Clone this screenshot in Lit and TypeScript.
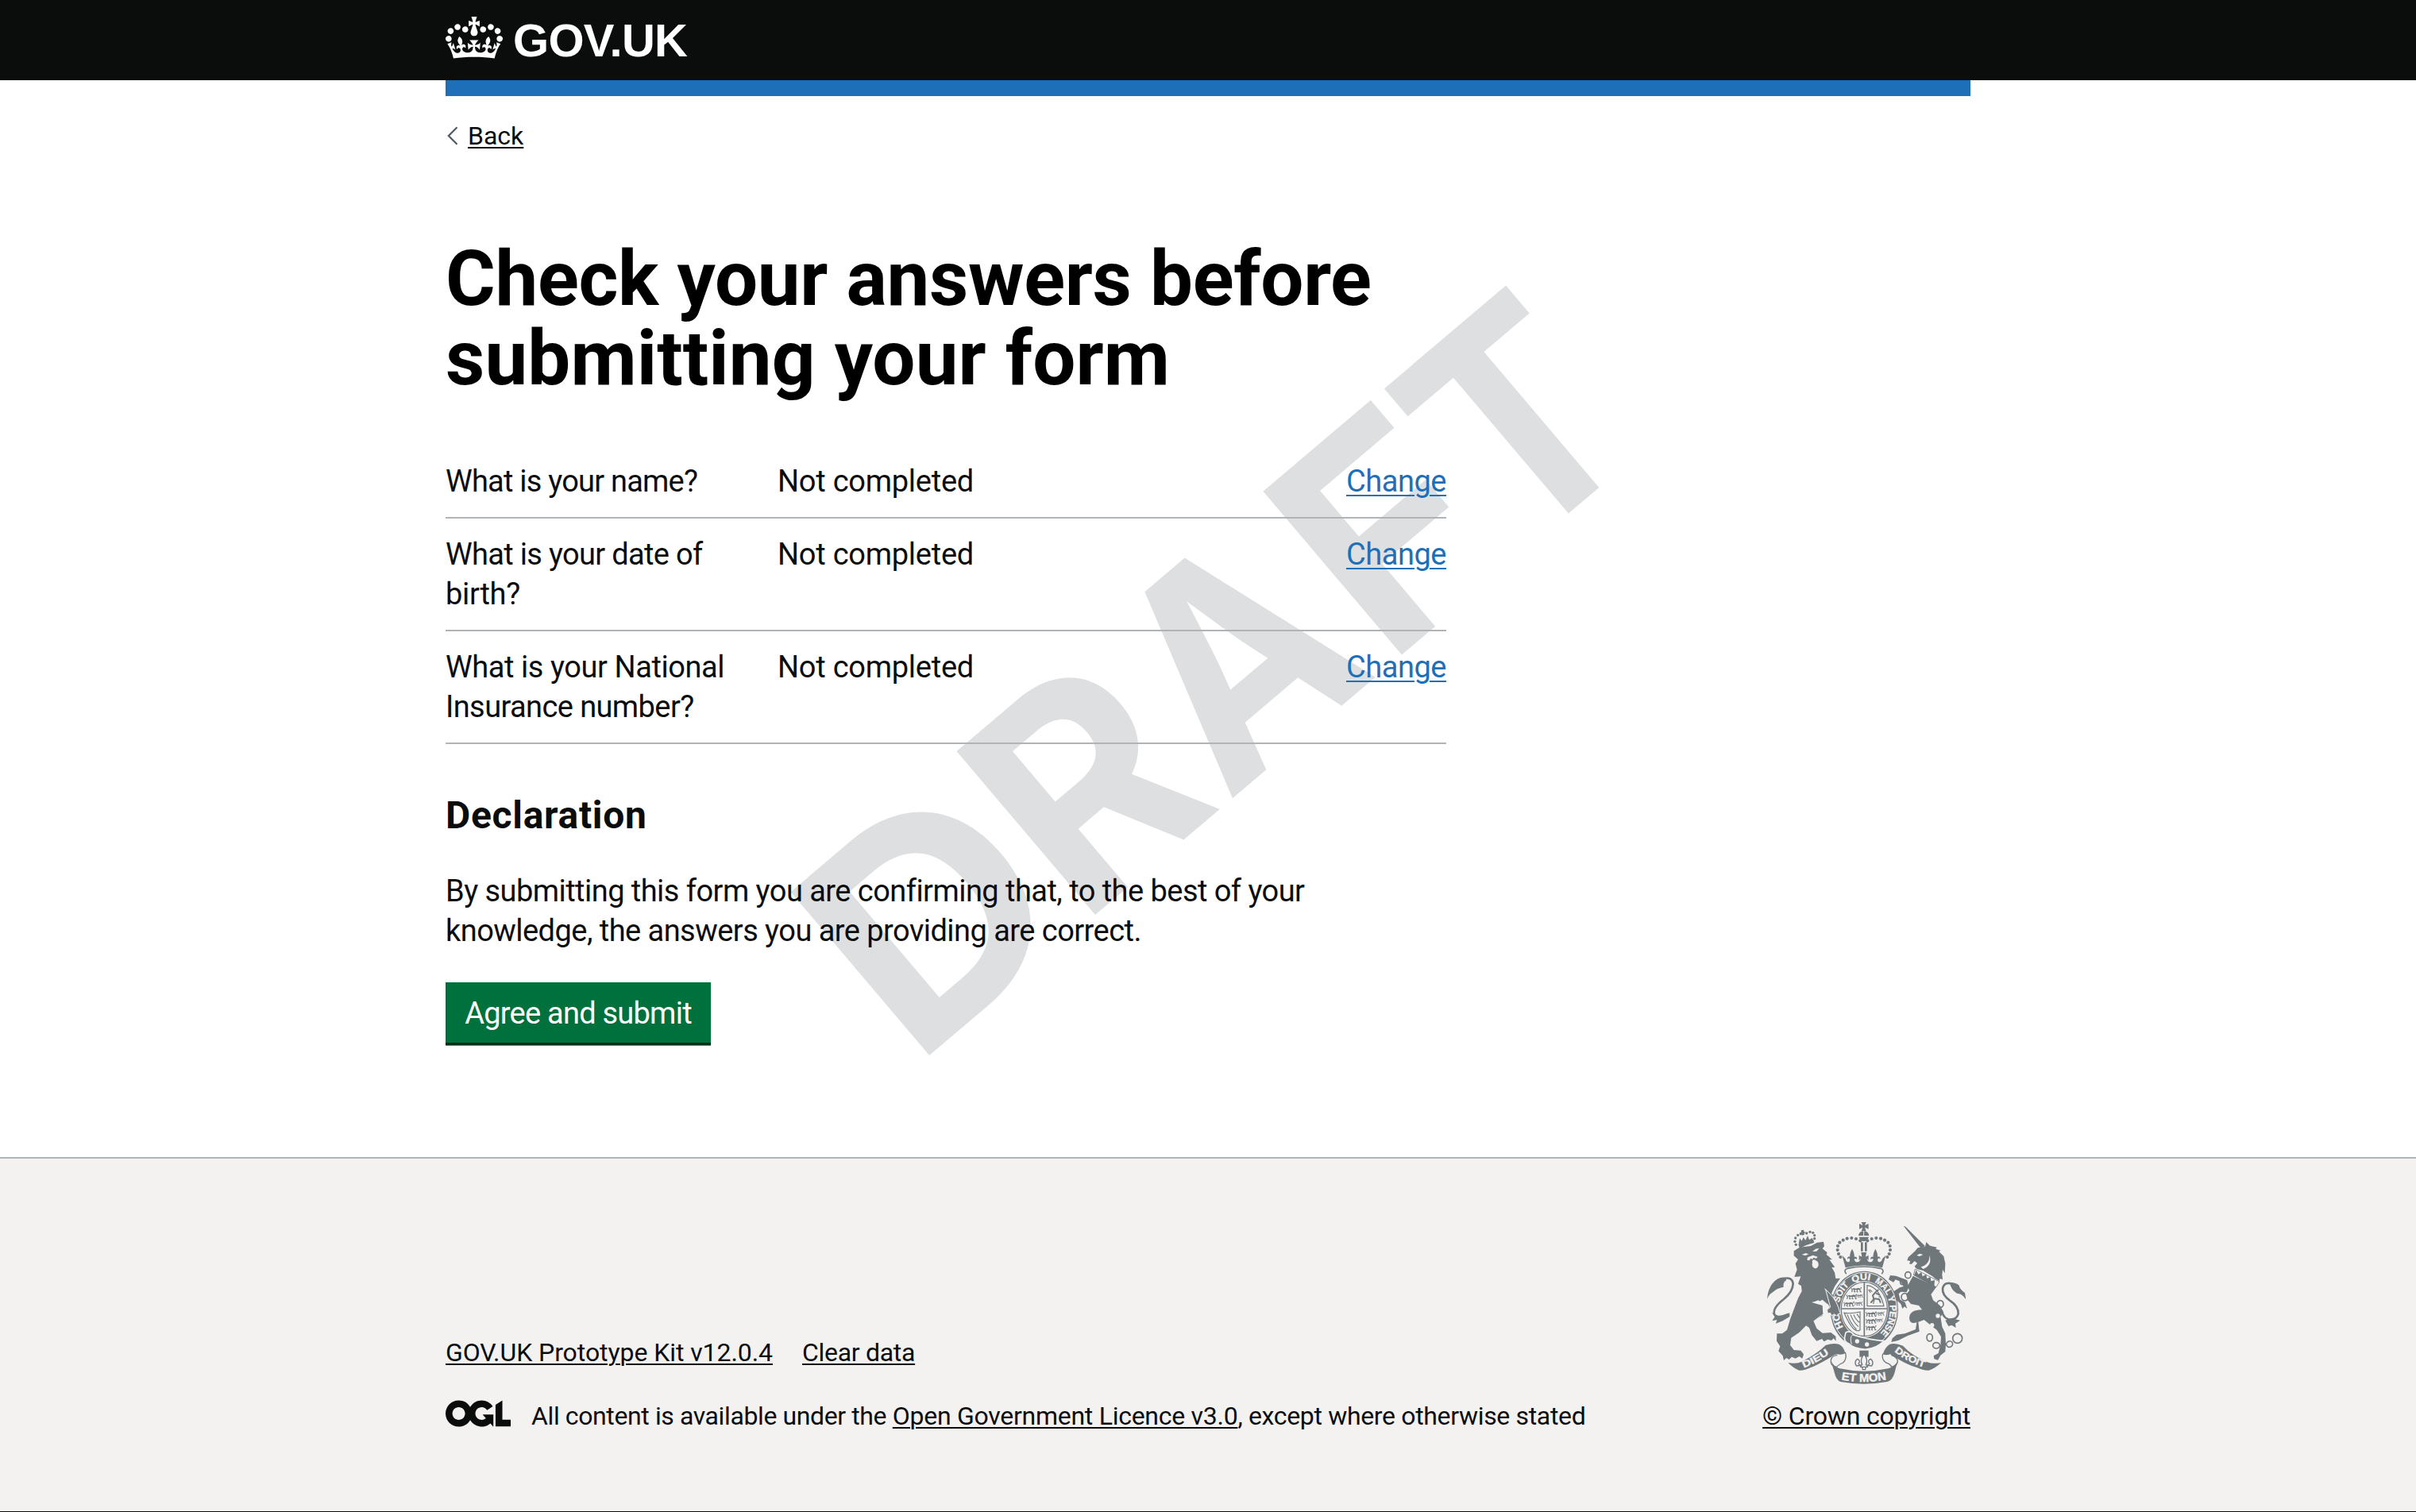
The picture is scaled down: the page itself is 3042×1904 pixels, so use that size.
import { LitElement, html, svg, css } from 'lit';

type Line = [text: string, tracking: string];

const ANSWERS: Line[][] = [
  [['What is your name?', 't-name']],
  [['What is your date of', 't-date'], ['birth?', 't-birth']],
  [['What is your National', 't-national'], ['Insurance number?', 't-insurance']],
];

const crown = svg`<path fill="currentColor" fill-rule="evenodd" d="M25 30.2c3.5 1.5 7.7-.2 9.1-3.7 1.5-3.6-.2-7.8-3.9-9.2-3.6-1.4-7.6.3-9.1 3.9-1.4 3.5.3 7.5 3.9 9zM9 39.5c3.6 1.5 7.8-.2 9.2-3.7 1.5-3.6-.2-7.8-3.9-9.1-3.6-1.5-7.6.2-9.1 3.8-1.4 3.5.3 7.5 3.8 9zM4.4 57.2c3.5 1.5 7.7-.2 9.1-3.8 1.5-3.6-.2-7.7-3.9-9.1-3.5-1.5-7.6.3-9.1 3.8-1.4 3.5.3 7.6 3.9 9.1zm38.3-21.4c3.5 1.5 7.7-.2 9.1-3.8 1.5-3.6-.2-7.7-3.9-9.1-3.6-1.5-7.6.3-9.1 3.8-1.3 3.6.4 7.7 3.9 9.1zm64.4-5.6c-3.6 1.5-7.8-.2-9.1-3.7-1.5-3.6.2-7.8 3.8-9.2 3.6-1.4 7.7.3 9.2 3.9 1.3 3.5-.4 7.5-3.9 9zm15.9 9.3c-3.6 1.5-7.7-.2-9.1-3.7-1.5-3.6.2-7.8 3.7-9.1 3.6-1.5 7.7.2 9.2 3.8 1.5 3.5-.3 7.5-3.8 9zm4.7 17.7c-3.6 1.5-7.8-.2-9.2-3.8-1.5-3.6.2-7.7 3.9-9.1 3.6-1.5 7.7.3 9.2 3.8 1.3 3.5-.4 7.6-3.9 9.1zM89.3 35.8c-3.6 1.5-7.8-.2-9.2-3.8-1.4-3.6.2-7.7 3.9-9.1 3.6-1.5 7.7.3 9.2 3.8 1.4 3.6-.3 7.7-3.9 9.1zM69.7 17.7l8.9 4.7V9.3l-8.9 2.8c-.2-.3-.5-.6-.9-.9L72.4 0H59.6l3.5 11.2c-.3.3-.6.5-.9.9l-8.8-2.8v13.1l8.8-4.7c.3.3.6.7.9.9l-5 15.4v.1c-.2.8-.4 1.6-.4 2.4 0 4.1 3.1 7.5 7 8.1h.2c.3 0 .7.1 1 .1.4 0 .7 0 1-.1h.2c4-.6 7.1-4.1 7.1-8.1 0-.8-.1-1.7-.4-2.4V34l-5.1-15.4c.4-.2.7-.6 1-.9zM66 92.8c16.9 0 32.8 1.1 47.1 3.2 4-16.9 8.9-26.7 14-33.5l-9.6-3.4c1 4.9 1.1 7.2 0 10.2-1.5-1.4-3-4.3-4.2-8.7L108.6 76c2.8-2 5-3.2 7.5-3.3-4.4 9.4-10 11.9-13.6 11.2-4.3-.8-6.3-4.6-5.6-7.9 1-4.7 5.7-5.9 8-.5 4.3-8.7-3-11.4-7.6-8.8 7.1-7.2 7.9-13.5 2.1-21.1-8 6.1-8.1 12.3-4.5 20.8-4.7-5.4-12.1-2.5-9.5 6.2 3.4-5.2 7.9-2 7.2 3.1-.6 4.3-6.4 7.8-13.5 7.2-10.3-.9-10.9-8-11.2-13.8 2.5-.5 7.1 1.8 11 7.3L80.2 60c-4.1 4.4-8 5.3-12.3 5.4 1.4-4.4 8-11.6 8-11.6H55.5s6.4 7.2 7.9 11.6c-4.2-.1-8-1-12.3-5.4l1.4 16.4c3.9-5.5 8.5-7.7 10.9-7.3-.3 5.8-.9 12.8-11.1 13.8-7.2.6-12.9-2.9-13.5-7.2-.7-5 3.8-8.3 7.1-3.1 2.7-8.7-4.6-11.6-9.4-6.2 3.7-8.5 3.6-14.7-4.6-20.8-5.8 7.6-5 13.9 2.2 21.1-4.7-2.6-11.9.1-7.7 8.8 2.3-5.5 7.1-4.2 8.1.5.7 3.3-1.3 7.1-5.7 7.9-3.5.7-9-1.8-13.5-11.2 2.5.1 4.7 1.3 7.5 3.3l-4.7-15.4c-1.2 4.4-2.7 7.2-4.3 8.7-1.1-3-.9-5.3 0-10.2l-9.5 3.4c5 6.9 9.9 16.7 14 33.5 14.8-2.1 30.8-3.2 47.7-3.2z"/>`;

const ogl = svg`<path fill="currentColor" d="M421.5 142.8V.1l-50.7 32.3v161.1h112.4v-50.7zm-122.3-9.6A47.12 47.12 0 0 1 221 97.8c0-26 21.1-47.1 47.1-47.1 16.7 0 31.4 8.7 39.7 21.8l42.7-27.2A97.63 97.63 0 0 0 268.1 0c-36.5 0-68.3 20.1-85.1 49.7A98 98 0 0 0 97.8 0C43.9 0 0 43.9 0 97.8s43.9 97.8 97.8 97.8c36.5 0 68.3-20.1 85.1-49.7a97.76 97.76 0 0 0 149.6 25.4l19.4 22.2h3v-87.8h-80l24.3 27.5zM97.8 145c-26 0-47.1-21.1-47.1-47.1s21.1-47.1 47.1-47.1 47.1 21.1 47.1 47.1S123.8 145 97.8 145"/>`;

const crownBeads: [number, number][] = [
  [427, 127], [411, 120], [394, 117], [377, 119], [362, 125], [349, 134], [342, 147], [341, 162], [345, 177], [352, 189],
];
const lionBeads: [number, number][] = [
  [184, 142], [180, 130], [182, 117], [191, 106], [202, 101], [224, 99], [237, 94], [248, 97], [254, 107], [254, 119],
];

const passant = svg`<path class="thin" d="M2 12l8-6 8 2 10-3 8 4M6 13l-4 6M14 9l-2 9 5 1M24 8l-2 10 5 1M33 9l2 9 4 0M36 6l3-5M2 8l-1-5M10 9h22"/>`;

const arms = svg`
  <defs>
    <path id="garter" d="M442 501A97 113 0 0 1 442 275A97 113 0 0 1 442 501"/>
    <path id="dieu" d="M214 608Q264 588 316 550"/>
    <path id="droit" d="M555 546Q608 588 670 606"/>
    <path id="etmon" d="M355 652Q440 668 527 652"/>
  </defs>

  <!-- lion -->
  <path class="g" d="M176 184L176 166L198 152L240 147L264 134L288 131L291 148L284 157L302 172L299 180L307 186L320 198L310 199L331 227L319 228L330 247L334 270L351 269L330 300L318 326L337 350L350 384L350 408L344 405L338 412L330 404L318 410L314 400L304 402L302 388L312 378L304 366L290 362L283 352L276 358L268 352L243 362L280 372L286 400L280 388L284 410L268 418L250 430L262 458L284 476L316 474L334 488L335 506L326 496L318 504L304 500L290 508L282 498L262 506L244 484L234 456L222 448L196 474L166 494L162 522L176 540L202 542L213 556L208 572L196 564L182 572L168 566L158 576L148 570L138 579L134 562L118 544L124 526L111 506L112 478L132 478L150 464L162 424L192 344L206 318L204 298L192 290L202 262L178 264L188 236L182 214L192 198Z"/>
  <path class="b" d="M243 360L262 356L276 376L300 388L296 372L302 366L284 350L272 356L290 404L268 418L250 428L236 440L228 450L230 420L242 400Z"/>
  <path class="g" d="M243 360L284 372L286 404L266 418L250 430L230 452L222 420Z"/>
  <path class="b" d="M206 180l14-6 12 4-12 5zM246 168l12-10 14-3-10 12zM228 190l20-8 18 6-6 6-10-3-4 6-6-3-6 8-8-2z"/>
  <ellipse class="b" cx="257" cy="217" rx="12" ry="15"/><circle class="b" cx="252" cy="206" r="7"/>
  <path class="bs" d="M292 308Q314 324 322 352"/>
  <path class="g" d="M75 347Q78 310 94 290Q116 262 142 266L148 276Q134 284 137 302Q112 306 96 322Q84 328 75 347Z"/>
  <path class="tail" d="M132 272Q170 260 173 290Q172 320 138 348Q96 380 102 404Q110 424 156 404"/>
  <path class="g" d="M93 398L104 414L94 430L112 426L108 440L134 430L160 414L160 400L120 414Z"/>
  <path class="g" d="M193 141L249 122L253 134Q222 142 198 156Z"/>
  ${lionBeads.map(([x, y]) => svg`<circle class="g" cx=${x} cy=${y} r="5"/>`)}
  <path class="g" d="M203 88l10-2 3 18-10 3zM199 96l18-4 1 7-18 4zM194 140l4-22 8 10 6-14 8 12 8-18 6 16 12-8 2 20z"/>

  <!-- central crown -->
  <path class="g" d="M431 57h18l-5 12 14-6v20l-14-6 5 13h-18l5-13-13 6v-20l13 6z"/>
  <path class="g" d="M420 108a20 18 0 0 1 40 0zM422 113h37q-5 15-19 16q-14-1-18-16z"/><path class="bs" d="M440 90v18"/>
  <path class="g" d="M429 133h8v34h-8zM444 133h8v34h-8z"/>
  ${crownBeads.map(([x, y]) => svg`<circle class="g" cx=${x} cy=${y} r="6.2"/><circle class="g" cx=${881 - x} cy=${y} r="6.2"/>`)}
  <path class="g" d="M358 182L371 229Q440 212 510 229L523 182L510 196Q506 210 496 207Q490 202 494 194Q502 192 503 198Q502 184 492 188Q494 176 484 158Q474 176 476 188Q464 186 466 198Q472 192 476 197Q474 208 464 208Q454 206 452 194L458 202V182L447 188L450 171H430L433 188L422 182V202L429 194Q426 206 416 208Q406 208 404 197Q408 192 414 198Q416 186 404 188Q406 176 396 158Q386 176 388 188Q378 184 378 198Q380 192 386 194Q390 202 384 207Q374 210 371 196Z"/>
  <path class="rim" d="M374 253Q362 238 378 232Q440 218 504 232Q520 238 508 253"/>

  <!-- garter and shield -->
  <ellipse class="g" cx="442" cy="388" rx="128" ry="146"/>
  <ellipse class="bs" cx="442" cy="387" rx="123" ry="140"/>
  <ellipse class="b" cx="442" cy="386" rx="91" ry="107"/>
  <ellipse class="thin" cx="442" cy="386" rx="87" ry="102"/>
  <path class="cross" d="M442 284v204M355 384h174"/>
  <g transform="translate(392 302)">${passant}</g>
  <g transform="translate(374 328)">${passant}</g>
  <g transform="translate(364 356)">${passant}</g>
  <g transform="translate(410 328) scale(.7)">${passant}</g>
  <g transform="translate(404 356) scale(.8)">${passant}</g>
  <g transform="translate(448 394)">${passant}</g>
  <g transform="translate(448 420)">${passant}</g>
  <g transform="translate(448 446)">${passant}</g>
  <g transform="translate(486 394) scale(.8)">${passant}</g>
  <g transform="translate(484 420) scale(.7)">${passant}</g>
  <path class="thin" d="M453 374V296Q498 302 516 374ZM466 324l-8-12M496 338l10 4M480 350l-4 16M462 312l10 8"/>
  <path class="thick" d="M466 362l12-14-4-14 12-14 10-8M478 346l20 2 6 14M486 326l14 6"/>
  <path class="thin" d="M366 400Q394 404 426 396V464Q402 482 366 400ZM378 406Q390 440 412 462M390 406Q400 434 420 452M402 406Q408 424 424 436M414 404l10 14"/>
  <text class="motto small"><textPath href="#garter" startOffset="14.5%" textLength="58" lengthAdjust="spacingAndGlyphs">HO</textPath></text>
  <text class="motto small"><textPath href="#garter" startOffset="29%" textLength="76" lengthAdjust="spacingAndGlyphs">SOIT</textPath></text>
  <text class="motto small"><textPath href="#garter" startOffset="43.2%" textLength="66" lengthAdjust="spacingAndGlyphs">QUI</textPath></text>
  <text class="motto small"><textPath href="#garter" startOffset="56%" textLength="70" lengthAdjust="spacingAndGlyphs">MAL</textPath></text>
  <text class="motto small"><textPath href="#garter" startOffset="67.5%" textLength="148" lengthAdjust="spacingAndGlyphs">Y PENSE</textPath></text>
  <path class="g belt" d="M372 474Q392 464 402 484Q450 500 516 506Q490 534 446 538Q400 534 384 516Q364 508 368 492Z"/>
  <path class="bs" d="M398 482Q386 492 394 518"/>
  <circle class="b" cx="415" cy="507" r="8"/><circle class="b" cx="452" cy="519" r="8"/>
  <!-- lion paw over the garter -->
  <path class="g paw" d="M296 312Q330 340 344 378L352 404L344 403L338 412L330 404L318 410L314 400L304 402L302 388L314 378Z"/>

  <!-- unicorn -->
  <path class="g" d="M590 71L598 74L672 148L656 156Z"/>
  <path class="g" d="M604 202L608 190L632 168L644 154L672 150L676 132L690 146L716 152L712 158L730 164L724 168L742 186L748 214L746 250L738 236L736 256L738 274L728 270L724 284L700 262L664 240L640 234L632 224L642 212L632 204L620 216L612 214L616 204Z"/>
  <path class="b" d="M640 182l12-6 12 4-14 6zM656 226Q690 216 688 182Q700 220 664 234z"/>
  <path class="b" d="M634 230L724 278L714 304L626 256Z"/>
  <path class="fine" d="M634 234L726 282L714 302L628 256Z"/>
  <path class="g" d="M630 258l8-20 8 16 12-8 4 16 14-8 3 16 13-6 2 16 14-4-2 26z"/>
  <path class="g" d="M626 260L714 302L694 330L702 352L728 372L742 398L730 414L736 452L748 478L750 520L748 546L730 560L720 578L706 574L704 562L722 552L730 520L732 490L716 464L700 452L668 426L646 434L650 470L606 486L570 504L544 510L548 496L564 482L596 478L636 462L640 436Q614 444 612 420Q612 388 660 388L648 372L618 366L606 352L600 330L612 316L606 298Z"/>
  <path class="g" d="M534 274L540 258L562 260L604 276L610 304L602 322L580 320L572 328L578 350L596 360L604 384L594 376L586 384L580 366L562 350L554 318L576 304L590 300L580 282L560 274L552 284Z"/>
  <g class="chain"><ellipse cx="607" cy="257" rx="11" ry="12"/><ellipse cx="586" cy="283" rx="8" ry="10"/><ellipse cx="595" cy="340" rx="13" ry="14"/><ellipse cx="729" cy="366" rx="12" ry="13"/><ellipse cx="689" cy="493" rx="11" ry="14"/><ellipse cx="714" cy="523" rx="13" ry="11"/><ellipse cx="764" cy="518" rx="12" ry="11" transform="rotate(-30 764 518)"/><circle cx="794" cy="496" r="18"/></g>
  <circle class="b" cx="720" cy="411" r="8"/><circle class="b" cx="698" cy="446" r="8"/>
  <path class="tail" d="M784 292Q744 278 738 308Q736 332 764 352Q800 376 797 404Q790 428 760 424Q744 420 736 398"/>
  <path class="g" d="M764 286Q790 286 800 296Q802 310 822 324L826 350Q812 326 792 326Q772 316 764 286ZM748 428L772 420L804 428L786 440L788 456L772 446L760 450Z"/>

  <!-- scrolls -->
  <path class="g" d="M154 588Q186 594 206 584Q262 556 296 522Q324 512 346 518Q364 526 370 552Q360 560 340 556L330 558Q280 590 240 606Q216 618 196 617Q176 610 154 588Z"/>
  <path class="g" d="M732 588Q700 594 680 586Q620 560 588 524Q560 512 538 518Q520 530 512 556Q524 562 540 556Q600 596 640 606Q664 618 686 617Q712 608 732 588Z"/>
  <path class="ribbon" d="M370 548Q378 572 362 588Q344 596 338 604Q312 600 316 578Q320 560 340 560M512 554Q506 576 524 588Q540 592 545 604Q570 598 568 580Q564 566 544 560"/>
  <path class="g" d="M316 580Q326 604 350 610Q440 630 532 610Q556 604 568 582L556 628Q548 656 528 660Q440 676 352 660Q336 654 330 628Z"/>
  <path class="g" d="M424 542h34v24h-34z"/>
  <path class="fleur" d="M441 556Q424 576 434 596Q426 600 420 592Q430 580 416 574Q402 584 412 600L430 598L428 604H454L452 598L470 600Q480 584 466 574Q452 580 462 592Q456 600 448 596Q458 576 441 556ZM434 604l2 10h10l2-10"/>
  <text class="motto side"><textPath href="#dieu" textLength="110" lengthAdjust="spacingAndGlyphs">DIEU</textPath></text>
  <text class="motto side"><textPath href="#droit" textLength="128" lengthAdjust="spacingAndGlyphs">DROIT</textPath></text>
  <text class="motto big"><textPath href="#etmon" textLength="172" lengthAdjust="spacingAndGlyphs">ET MON</textPath></text>
`;

class AppRoot extends LitElement {
  static styles = css`
    :host { display: block; font-family: Roboto, sans-serif; font-size: 38px; line-height: 50px; color: #0b0c0c; background: #fff; }
    .page { position: relative; height: 1904px; display: flex; flex-direction: column; overflow: hidden; }
    .wrap { width: 1920px; margin: 0 auto; }
    a { color: inherit; text-decoration: underline; text-decoration-thickness: 2px; text-underline-offset: 3px; white-space: nowrap; }

    header { background: #0b0c0c; color: #fff; height: 101px; }
    .brand { display: flex; padding-top: 21px; gap: 13px; }
    .crown { width: 72px; height: 53px; display: block; }
    .wordmark { font: bold 58px/60px "Liberation Sans", sans-serif; letter-spacing: -.7px; }
    .bar { height: 20px; background: #1d70b8; }
    .back { display: flex; align-items: center; padding-top: 30px; font-size: 32px; line-height: 40px; gap: 10px; }
    .back svg { width: 18px; height: 26px; }

    .content { position: relative; }
    main { width: 1920px; margin: 0 auto; height: 1266px; box-sizing: border-box; padding-top: 110px; position: relative; }
    h1 { margin: 0 0 60px; font-size: 96px; line-height: 100px; font-weight: 700; color: #000; white-space: nowrap; letter-spacing: .1px; }
    h1 .first { letter-spacing: -.33px; }
    .list { margin: 0 0 60px; width: 1260px; }
    .row { display: grid; grid-template-columns: 418px 1fr auto; padding: 20px 0; border-bottom: 2px solid #b1b4b6; }
    .row span { display: block; white-space: nowrap; }
    .row a { color: #1d70b8; text-underline-offset: 4px; letter-spacing: -.47px; }
    h2 { margin: 0 0 40px; font-size: 48px; line-height: 60px; font-weight: 700; letter-spacing: .7px; }
    p { margin: 0 0 40px; white-space: nowrap; letter-spacing: -.54px; }
    button { display: block; border: 0; margin: 0; width: 334px; height: 76px; padding: 20px 0 18px; background: #00703c; color: #fff; box-shadow: 0 3.6px 0 #002d18; font: 400 38px/38px Roboto, sans-serif; letter-spacing: -.76px; }

    .t-name { letter-spacing: -.78px; }
    .t-date { letter-spacing: -.68px; }
    .t-birth { letter-spacing: -.3px; }
    .t-national { letter-spacing: -.43px; }
    .t-insurance { letter-spacing: -.6px; }
    .t-status { letter-spacing: -.25px; }
    .t-kit { letter-spacing: -.07px; }
    .t-clear { letter-spacing: -.3px; }

    .draft { position: absolute; left: 0; top: 0; width: 3042px; height: 1457px; }
    .draft text { font: 700 371px Inter, sans-serif; fill: #dedfe1; }

    footer { border-top: 2px solid #b1b4b6; background: #f3f2f1; flex: 1; font-size: 32px; line-height: 40px; border-bottom: 1px solid #0b0c0c; }
    .foot { display: flex; justify-content: space-between; align-items: flex-end; padding-top: 80px; }
    .links { display: flex; gap: 37px; padding-bottom: 40px; }
    .licence { display: flex; white-space: nowrap; }
    .licence svg { width: 82px; height: 34px; margin-right: 26px; }
    .licence p { letter-spacing: -.39px; margin: 0; }
    .licence a { letter-spacing: -.27px; }
    .licence .rest { letter-spacing: -.34px; }
    .copy { display: flex; flex-direction: column; align-items: center; gap: 20px; letter-spacing: -.18px; }
    .copy svg { width: 250px; height: 204px; display: block; }

    .g { fill: #6f777b; }
    .b { fill: #f3f2f1; }
    .bs { fill: none; stroke: #f3f2f1; stroke-width: 3; }
    .belt, .paw { stroke: #f3f2f1; stroke-width: 5; }
    .paw { stroke-width: 3; }
    .tail { fill: none; stroke: #6f777b; stroke-width: 8; }
    .thin, .thick, .fine, .cross, .rim, .ribbon, .fleur { fill: none; stroke: #6f777b; stroke-width: 3.5; }
    .thick { stroke-width: 6; }
    .fine { stroke-width: 2.5; }
    .rim, .cross { stroke-width: 5; }
    .ribbon, .fleur { stroke-width: 4; }
    .fleur { fill: #f3f2f1; }
    .chain { fill: none; stroke: #6f777b; stroke-width: 5; }
    .motto { font: bold 38px "Liberation Sans", sans-serif; fill: #f3f2f1; stroke: #f3f2f1; stroke-width: 1; }
    .small { font-size: 34px; }
    .side { font-size: 36px; }
    .big { font-size: 43px; }
  `;

  render() {
    return html`
      <div class="page">
        <header>
          <div class="wrap brand"><svg class="crown" viewBox="0 0 132 97">${crown}</svg><span class="wordmark">GOV.UK</span></div>
        </header>
        <svg class="draft" viewBox="0 0 3042 1457">
          <g transform="translate(1169 1330) rotate(-40.3)">
            <text transform="translate(-23.7) scale(1.03 1)">D</text>
            <text transform="translate(251.6) scale(.972 1)">R</text>
            <text transform="translate(494) scale(.91 1)">A</text>
            <text transform="translate(757)">F</text>
            <text transform="translate(969) scale(.911 1)">T</text>
          </g>
        </svg>
        <div class="content wrap">
          <div class="bar"></div>
          <div class="back">
            <svg viewBox="0 0 18 26"><path d="M14.5 2.2L3.8 13L14.5 23.8" fill="none" stroke="#505a5f" stroke-width="2.2"/></svg><a>Back</a>
          </div>
        </div>
        <main>
          <h1><span class="first">Check your answers before</span><br>submitting your form</h1>
          <div class="list">
            ${ANSWERS.map((lines) => html`
              <div class="row">
                <div>${lines.map(([text, tracking]) => html`<span class=${tracking}>${text}</span>`)}</div>
                <span class="t-status">Not completed</span>
                <a>Change</a>
              </div>`)}
          </div>
          <h2>Declaration</h2>
          <p>By submitting this form you are confirming that, to the best of your<br>knowledge, the answers you are providing are correct.</p>
          <button>Agree and submit</button>
        </main>
        <footer>
          <div class="wrap foot">
            <div>
              <div class="links"><a class="t-kit">GOV.UK Prototype Kit v12.0.4</a><a class="t-clear">Clear data</a></div>
              <div class="licence">
                <svg viewBox="0 0 483.2 195.7">${ogl}</svg>
                <p>All content is available under the <a>Open Government Licence v3.0</a><span class="rest">, except where otherwise stated</span></p>
              </div>
            </div>
            <div class="copy"><svg viewBox="75 57 750 612">${arms}</svg><a>© Crown copyright</a></div>
          </div>
        </footer>
      </div>`;
  }
}
customElements.define('app-root', AppRoot);
